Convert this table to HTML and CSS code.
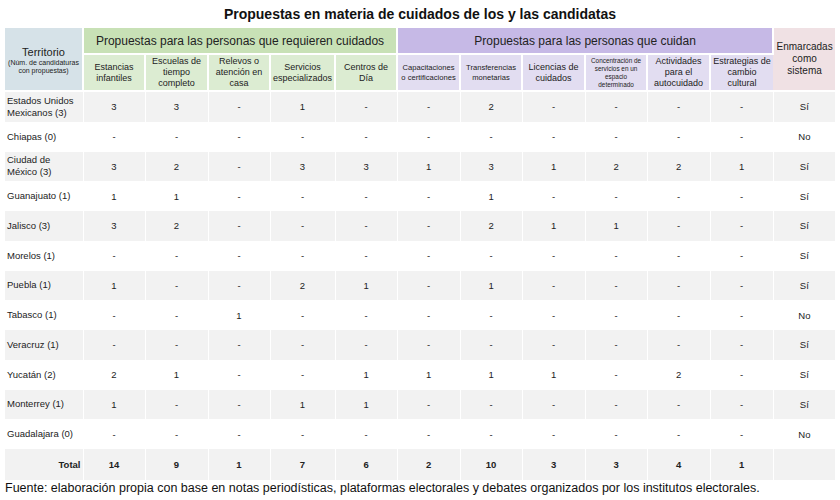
FILE: index.html
```html
<!DOCTYPE html>
<html lang="es">
<head>
<meta charset="utf-8">
<link rel="stylesheet" href="styles.css">
</head>
<body>
<h1 class="title">Propuestas en materia de cuidados de los y las candidatas</h1>
<table class="grid">
  <colgroup>
    <col class="c-terr">
    <col style="width:62px"><col style="width:63px"><col style="width:62px"><col style="width:65px"><col style="width:62px">
    <col style="width:63px"><col style="width:62px"><col style="width:63px"><col style="width:62px"><col style="width:63px"><col style="width:63px">
    <col style="width:62px">
  </colgroup>
  <thead>
    <tr class="h1">
      <th rowspan="2" class="terr-h"><span class="terr-main">Territorio</span><span class="terr-sub">(Núm. de candidaturas con propuestas)</span></th>
      <th colspan="5" class="g-green">Propuestas para las personas que requieren cuidados</th>
      <th colspan="6" class="g-purple">Propuestas para las personas que cuidan</th>
      <th rowspan="2" class="g-pink">Enmarcadas como sistema</th>
    </tr>
    <tr class="h2">
      <th class="s-green">Estancias infantiles</th>
      <th class="s-green">Escuelas de tiempo completo</th>
      <th class="s-green">Relevos o atención en casa</th>
      <th class="s-green">Servicios especializados</th>
      <th class="s-green">Centros de Día</th>
      <th class="s-purple small">Capacitaciones o certificaciones</th>
      <th class="s-purple small">Transferencias monetarias</th>
      <th class="s-purple">Licencias de cuidados</th>
      <th class="s-purple tiny">Concentración de servicios en un espacio determinado</th>
      <th class="s-purple">Actividades para el autocuidado</th>
      <th class="s-purple">Estrategias de cambio cultural</th>
    </tr>
  </thead>
  <tbody>
    <tr><td class="name">Estados Unidos Mexicanos (3)</td><td>3</td><td>3</td><td>-</td><td>1</td><td>-</td><td>-</td><td>2</td><td>-</td><td>-</td><td>-</td><td>-</td><td>Sí</td></tr>
    <tr><td class="name">Chiapas (0)</td><td>-</td><td>-</td><td>-</td><td>-</td><td>-</td><td>-</td><td>-</td><td>-</td><td>-</td><td>-</td><td>-</td><td>No</td></tr>
    <tr><td class="name">Ciudad de México (3)</td><td>3</td><td>2</td><td>-</td><td>3</td><td>3</td><td>1</td><td>3</td><td>1</td><td>2</td><td>2</td><td>1</td><td>Sí</td></tr>
    <tr><td class="name">Guanajuato (1)</td><td>1</td><td>1</td><td>-</td><td>-</td><td>-</td><td>-</td><td>1</td><td>-</td><td>-</td><td>-</td><td>-</td><td>Sí</td></tr>
    <tr><td class="name">Jalisco (3)</td><td>3</td><td>2</td><td>-</td><td>-</td><td>-</td><td>-</td><td>2</td><td>1</td><td>1</td><td>-</td><td>-</td><td>Sí</td></tr>
    <tr><td class="name">Morelos (1)</td><td>-</td><td>-</td><td>-</td><td>-</td><td>-</td><td>-</td><td>-</td><td>-</td><td>-</td><td>-</td><td>-</td><td>Sí</td></tr>
    <tr><td class="name">Puebla (1)</td><td>1</td><td>-</td><td>-</td><td>2</td><td>1</td><td>-</td><td>1</td><td>-</td><td>-</td><td>-</td><td>-</td><td>Sí</td></tr>
    <tr><td class="name">Tabasco (1)</td><td>-</td><td>-</td><td>1</td><td>-</td><td>-</td><td>-</td><td>-</td><td>-</td><td>-</td><td>-</td><td>-</td><td>No</td></tr>
    <tr><td class="name">Veracruz (1)</td><td>-</td><td>-</td><td>-</td><td>-</td><td>-</td><td>-</td><td>-</td><td>-</td><td>-</td><td>-</td><td>-</td><td>Sí</td></tr>
    <tr><td class="name">Yucatán (2)</td><td>2</td><td>1</td><td>-</td><td>-</td><td>1</td><td>1</td><td>1</td><td>1</td><td>-</td><td>2</td><td>-</td><td>Sí</td></tr>
    <tr><td class="name">Monterrey (1)</td><td>1</td><td>-</td><td>-</td><td>1</td><td>1</td><td>-</td><td>-</td><td>-</td><td>-</td><td>-</td><td>-</td><td>Sí</td></tr>
    <tr><td class="name">Guadalajara (0)</td><td>-</td><td>-</td><td>-</td><td>-</td><td>-</td><td>-</td><td>-</td><td>-</td><td>-</td><td>-</td><td>-</td><td>No</td></tr>
    <tr class="total"><td class="name">Total</td><td>14</td><td>9</td><td>1</td><td>7</td><td>6</td><td>2</td><td>10</td><td>3</td><td>3</td><td>4</td><td>1</td><td></td></tr>
  </tbody>
</table>
<p class="source">Fuente: elaboración propia con base en notas periodísticas, plataformas electorales y debates organizados por los institutos electorales.</p>
</body>
</html>
```
FILE: styles.css
```css
html, body {
  margin: 0;
  padding: 0;
  background: #ffffff;
}
body {
  padding: 0 5px;
  font-family: "Liberation Sans", Arial, sans-serif;
  color: #1e1e1e;
}
.title {
  margin: 0;
  height: 28px;
  line-height: 28px;
  font-size: 14px;
  font-weight: bold;
  text-align: center;
  color: #111;
}
.grid {
  width: 830px;
  table-layout: fixed;
  border-collapse: collapse;
  border-spacing: 0;
}
.c-terr { width: 78px; }
.grid th {
  font-weight: normal;
  border-right: 2px solid #ffffff;
  border-bottom: 2px solid #ffffff;
  padding: 0 2px;
  color: #222;
}
.grid th:last-child { border-right: none; }
.h1 th { height: 25px; }
.h2 th { height: 35px; }
.terr-h {
  background: #d6e2e8;
  vertical-align: middle;
  padding-top: 3px !important;
}
.terr-main {
  display: block;
  font-size: 11px;
  line-height: 13px;
}
.terr-sub {
  display: block;
  font-size: 7px;
  line-height: 8px;
}
.g-green {
  background: #c8e1b6;
  font-size: 12px;
}
.g-purple {
  background: #c6b9e6;
  font-size: 12px;
}
.g-pink {
  background: #f0e1e4;
  font-size: 10px;
  line-height: 12px;
}
.s-green {
  background: #dcecd2;
  font-size: 9px;
  line-height: 11px;
}
.s-purple {
  background: #e2ddf1;
  font-size: 9px;
  line-height: 11px;
}
.s-purple.small { font-size: 7.6px; line-height: 10px; }
.s-purple.tiny { font-size: 6.4px; line-height: 8px; }
.grid td {
  height: 29.75px;
  padding: 0;
  text-align: center;
  font-size: 9.5px;
  border-right: 1px solid #ffffff;
  color: #222;
}
.grid td:last-child { border-right: none; }
.grid tbody tr:nth-child(odd) td { background: #f2f2f2; }
.grid td.name {
  text-align: left;
  padding-left: 2px;
  line-height: 12px;
}
.total td {
  font-weight: bold;
  height: 31px;
}
.total td.name {
  text-align: right;
  padding-right: 2px;
}
.source {
  margin: 1px 0 0;
  font-size: 12.5px;
  line-height: 14px;
  color: #111;
}
```
